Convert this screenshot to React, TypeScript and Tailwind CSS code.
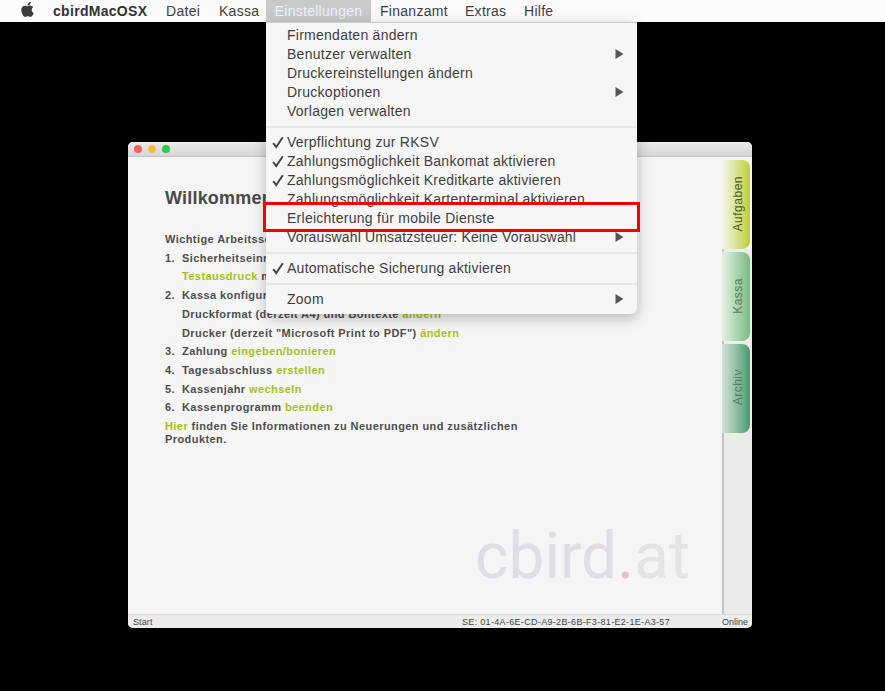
import React from "react";
import { FaApple } from "react-icons/fa";

const font = "[font-family:'Liberation_Sans',Arial,sans-serif]";

function Check() {
  return (
    <svg width="12" height="13" viewBox="0 0 12 13" className="absolute left-[6px] top-[3px]">
      <path d="M1.2 7.2 L4.2 11 L10.8 1.2" fill="none" stroke="#444" strokeWidth="2" />
    </svg>
  );
}

function Row({ label, checked, sub, tight }: { label: string; checked?: boolean; sub?: boolean; tight?: boolean }) {
  return (
    <div className={`relative h-[19px] pl-[21px] pr-[13px] flex items-center justify-between text-[14px] leading-[19px] text-[#3e3e3e] whitespace-nowrap ${tight ? "tracking-[0.16px]" : "tracking-[0.26px]"}`}>
      {checked && <Check />}
      <span>{label}</span>
      {sub && (
        <svg width="9" height="10" viewBox="0 0 9 10">
          <path d="M0.5 0 L8.5 5 L0.5 10 Z" fill="#565656" />
        </svg>
      )}
    </div>
  );
}

function Sep() {
  return (
    <div className="h-[12px] flex items-center">
      <div className="h-[2px] w-full bg-[#e6e6e6]" />
    </div>
  );
}

function Tab({ label, cls }: { label: string; cls: string }) {
  return (
    <div className={`h-[89px] w-[28px] rounded-r-[8px] flex items-center justify-center pl-[3px] ${cls}`}>
      <span className="[writing-mode:vertical-rl] rotate-180 text-[12px] tracking-[0.5px] pt-[2px]">{label}</span>
    </div>
  );
}

const G = ({ children }: { children: React.ReactNode }) => (
  <span className="text-[#a4c21a]">{children}</span>
);

function Line({ n, flush, children }: { n?: string; flush?: boolean; children: React.ReactNode }) {
  return (
    <div className="flex h-[18.7px] items-center whitespace-nowrap">
      {!flush && <span className="w-[17px]">{n}</span>}
      <span>{children}</span>
    </div>
  );
}

export default function App() {
  return (
    <div className={`relative h-[691px] w-[885px] bg-black overflow-hidden ${font}`}>
      {/* menu bar */}
      <div className="h-[22px] bg-[#fbfbfb] flex items-center text-[14px] tracking-[0.28px] text-[#3e3e3e]">
        <div className="w-[53px] flex justify-start pl-[19px]">
          <FaApple className="text-[#3c3c3c] text-[17px] -mt-[3px]" />
        </div>
        <span className="font-bold text-[#333] w-[113px] tracking-[0.3px]">cbirdMacOSX</span>
        <span className="w-[53px]">Datei</span>
        <span className="w-[47px]">Kassa</span>
        <span className="h-[22px] w-[105px] bg-[#c9c9c9] text-[#eaf2fa] flex items-center justify-center">Einstellungen</span>
        <span className="w-[94px] pl-[9px]">Finanzamt</span>
        <span className="w-[59px]">Extras</span>
        <span>Hilfe</span>
      </div>

      {/* application window */}
      <div className="ml-[128px] mt-[120px] w-[624px] h-[486px] rounded-[5px] overflow-hidden flex flex-col bg-[#f5f5f5]">
        <div className="h-[15px] bg-gradient-to-b from-[#ebebeb] to-[#d6d6d6] border-b border-[#c4c4c4] flex items-center gap-[6px] pl-[6px]">
          <span className="w-[8px] h-[8px] rounded-full bg-[#f9605a]" />
          <span className="w-[8px] h-[8px] rounded-full bg-[#fdbc40]" />
          <span className="w-[8px] h-[8px] rounded-full bg-[#34c84a]" />
        </div>
        <div className="flex-1 flex min-h-0">
          <div className="flex-1 relative pl-[37px] pt-[30px] text-[#4a4a4a]">
            <div className="text-[18px] font-bold leading-[22px] tracking-[0.2px]">Willkommen bei cbird</div>
            <div className="mt-[21px] text-[11px] font-bold tracking-[0.42px] text-[#4e4e4e]">
              <Line flush>Wichtige Arbeitsschritte</Line>
              <Line n="1.">Sicherheitseinrichtung prüfen</Line>
              <Line><G>Testausdruck</G> machen</Line>
              <Line n="2.">Kassa konfigurieren</Line>
              <Line>Druckformat (derzeit A4) und Bontexte <G>ändern</G></Line>
              <Line>Drucker (derzeit "Microsoft Print to PDF") <G>ändern</G></Line>
              <Line n="3.">Zahlung <G>eingeben/bonieren</G></Line>
              <Line n="4.">Tagesabschluss <G>erstellen</G></Line>
              <Line n="5.">Kassenjahr <G>wechseln</G></Line>
              <Line n="6.">Kassenprogramm <G>beenden</G></Line>
              <div className="leading-[13px] mt-[3px] w-[370px]">
                <G>Hier</G> finden Sie Informationen zu Neuerungen und zusätzlichen Produkten.
              </div>
            </div>
            <div className="absolute left-[347px] top-[362px] text-[64px] leading-[76px] font-normal [font-family:Roboto,sans-serif] whitespace-nowrap">
              <span className="text-[#e0dde6]">cbird</span>
              <span className="text-[#e3c4ce]">.</span>
              <span className="text-[#e4e3e6]">at</span>
            </div>
          </div>
          {/* tabs */}
          <div className="w-[30px] bg-[#ececec] flex flex-col">
            <div className="flex flex-col bg-[#f5f5f5] pt-[3px]">
              <Tab label="Aufgaben" cls="bg-gradient-to-r from-[#f5f5ea] to-[#bfd01c] text-[#4f5a20]" />
            </div>
            <div className="flex-1 border-l-2 border-[#c4c4c4] pt-[3px] flex flex-col gap-[3px]">
              <Tab label="Kassa" cls="-ml-[2px] bg-gradient-to-r from-[#e6efe6] to-[#77bb80] text-[#577a5e]" />
              <Tab label="Archiv" cls="-ml-[2px] bg-gradient-to-r from-[#d5e4da] to-[#479a6d] text-[#557d68]" />
            </div>
          </div>
        </div>
        <div className="h-[14px] bg-[#ececec] border-t border-[#dcdcdc] flex items-center pt-[2px] pl-[5px] pr-[4px] text-[9px] tracking-[0.1px] text-[#444] whitespace-nowrap">
          <span className="w-[329px]">Start</span>
          <span className="tracking-[0.32px]">SE: 01-4A-6E-CD-A9-2B-6B-F3-81-E2-1E-A3-57</span>
          <span className="ml-auto tracking-[0px]">Online</span>
        </div>
      </div>

      {/* open dropdown */}
      <div className="absolute left-[266px] top-[22px] w-[371px] bg-[#f6f6f6] border-t border-[#cfcfcf] rounded-b-[6px] shadow-[0_4px_14px_rgba(0,0,0,0.25)] pt-[2.5px] pb-[5.5px]">
        <Row label="Firmendaten ändern" />
        <Row label="Benutzer verwalten" sub />
        <Row label="Druckereinstellungen ändern" />
        <Row label="Druckoptionen" sub />
        <Row label="Vorlagen verwalten" />
        <Sep />
        <Row label="Verpflichtung zur RKSV" checked />
        <Row label="Zahlungsmöglichkeit Bankomat aktivieren" checked />
        <Row label="Zahlungsmöglichkeit Kreditkarte aktivieren" checked />
        <Row label="Zahlungsmöglichkeit Kartenterminal aktivieren" />
        <Row label="Erleichterung für mobile Dienste" />
        <Row label="Vorauswahl Umsatzsteuer: Keine Vorauswahl" sub tight />
        <Sep />
        <Row label="Automatische Sicherung aktivieren" checked />
        <Sep />
        <Row label="Zoom" sub />
      </div>

      {/* annotation */}
      <div className="absolute left-[263px] top-[202px] w-[377px] h-[30px] border-[3px] border-[#f00000]" />
    </div>
  );
}
